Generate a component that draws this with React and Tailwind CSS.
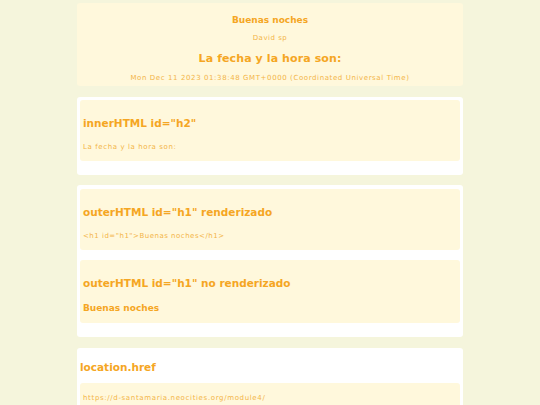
import React from 'react';

const font = { fontFamily: '"DejaVu Sans", Verdana, sans-serif' };

function Card({ children, className = '' }) {
  return <div className={`bg-white rounded-[3px] p-[3px] ${className}`}>{children}</div>;
}

function Panel({ title, children }) {
  return (
    <div className="bg-[#fff8dc] rounded-[3px] px-[3px] pt-[16px] pb-[9px]">
      <h2 className="text-[10.5px] leading-[14px] font-bold text-[#f5a623]">{title}</h2>
      <div className="mt-[12px]">{children}</div>
    </div>
  );
}

export default function App() {
  return (
    <div style={font} className="min-h-[405px] bg-[#f5f5dc] pt-[3px]">
      <div className="w-[386px] mx-auto flex flex-col">
        <header className="bg-[#fff8dc] rounded-[3px] pt-[11px] pb-[3px] text-center">
          <h1 className="text-[9px] leading-[12px] font-bold text-[#f5a623]">Buenas noches</h1>
          <p className="mt-[7px] text-[7px] leading-[10px] tracking-[0.5px] text-[#f3b548]">David sp</p>
          <h2 className="mt-[8px] text-[11px] leading-[16px] font-bold tracking-[0.1px] text-[#f5a623]">La fecha y la hora son:</h2>
          <p className="mt-[6px] text-[7px] leading-[10px] tracking-[0.6px] text-[#f3b548]">Mon Dec 11 2023 01:38:48 GMT+0000 (Coordinated Universal Time)</p>
        </header>

        <Card className="mt-[11px] pb-[14px]">
          <Panel title={'innerHTML id="h2"'}>
            <p className="text-[7px] leading-[10px] tracking-[0.6px] text-[#f3b548]">La fecha y la hora son:</p>
          </Panel>
        </Card>

        <Card className="mt-[10px] pt-[4px] pb-[14px] flex flex-col gap-[10px]">
          <Panel title={'outerHTML id="h1" renderizado'}>
            <p className="text-[7px] leading-[10px] tracking-[0.5px] text-[#f3b548]">{'<h1 id="h1">Buenas noches</h1>'}</p>
          </Panel>
          <Panel title={'outerHTML id="h1" no renderizado'}>
            <p className="text-[9px] leading-[12px] font-bold text-[#f5a623]">Buenas noches</p>
          </Panel>
        </Card>

        <Card className="mt-[11px] pb-[14px]">
          <h2 className="mt-[9px] text-[10.5px] leading-[14px] font-bold text-[#f5a623]">location.href</h2>
          <div className="mt-[9px] bg-[#fff8dc] rounded-[3px] px-[3px] pt-[10px] pb-[9px]">
            <p className="text-[7px] leading-[10px] tracking-[0.65px] text-[#f3b548]">https://d-santamaria.neocities.org/module4/</p>
          </div>
        </Card>
      </div>
    </div>
  );
}
